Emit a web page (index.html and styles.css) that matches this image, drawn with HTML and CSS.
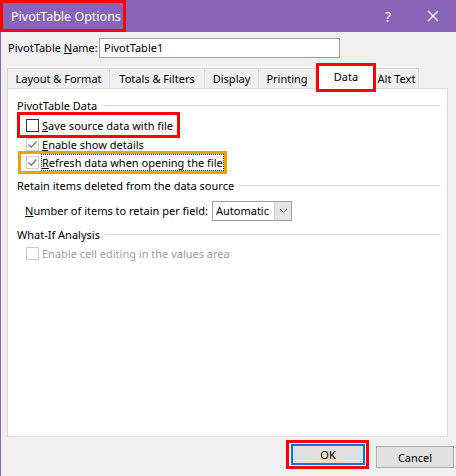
FILE: index.html
```html
<!DOCTYPE html>
<html lang="en">
  <head>
    <meta charset="UTF-8" />
    <title>PivotTable Options</title>
    <link rel="stylesheet" href="styles.css">
  </head>
  <body>
    <div class="window">
      <div class="titlebar">
        <span class="title mark-red">PivotTable Options</span>
        <span class="help">?</span>
        <svg class="close" width="12" height="12" viewBox="0 0 12 12">
          <path d="M1 1 L11 11 M11 1 L1 11" stroke="#fff" stroke-width="1.3" fill="none" />
        </svg>
      </div>
      <div class="content">
        <div class="name-row">
          <label>PivotTable <u>N</u>ame:</label>
          <div class="input">PivotTable1</div>
        </div>
        <div class="tabs">
          <div class="tab w-layout">Layout &amp; Format</div>
          <div class="tab w-totals">Totals &amp; Filters</div>
          <div class="tab w-display">Display</div>
          <div class="tab w-printing">Printing</div>
          <div class="tab active">Data</div>
          <div class="tab w-alt">Alt Text</div>
        </div>
        <div class="panel">
          <div class="group">PivotTable Data</div>
          <div class="check-row first">
            <span class="row-box mark-red">
              <span class="box"></span>
              <span><u>S</u>ave source data with file</span>
            </span>
          </div>
          <div class="check-row">
            <span class="row-box">
              <span class="box checked">
                <svg width="11" height="11" viewBox="0 0 11 11"><path d="M1.5 5.5 L4.2 8.2 L9.5 2.5" stroke="#6d6d6d" stroke-width="1.2" fill="none" /></svg>
              </span>
              <span><u>E</u>nable show details</span>
            </span>
          </div>
          <div class="check-row">
            <span class="row-box mark-orange">
              <span class="box checked">
                <svg width="11" height="11" viewBox="0 0 11 11"><path d="M1.5 5.5 L4.2 8.2 L9.5 2.5" stroke="#6d6d6d" stroke-width="1.2" fill="none" /></svg>
              </span>
              <span class="focus"><u>R</u>efresh data when opening the file</span>
            </span>
          </div>
          <div class="group">Retain items deleted from the data source</div>
          <div class="select-row">
            <span><u>N</u>umber of items to retain per field:</span>
            <div class="select">
              <span class="select-value">Automatic</span>
              <span class="select-arrow">
                <svg width="9" height="6" viewBox="0 0 9 6"><path d="M1 1 L4.5 4.5 L8 1" stroke="#555" stroke-width="1" fill="none" /></svg>
              </span>
            </div>
          </div>
          <div class="group what-if">What-If Analysis</div>
          <div class="check-row disabled">
            <span class="row-box">
              <span class="box"></span>
              <span>Enable cell editing in the values area</span>
            </span>
          </div>
        </div>
        <div class="buttons">
          <div class="mark-red btn-wrap"><button class="btn default">OK</button></div>
          <button class="btn cancel">Cancel</button>
        </div>
      </div>
    </div>
  </body>
</html>
```

FILE: styles.css
```css
* {
  margin: 0;
  padding: 0;
  box-sizing: border-box;
}
body {
  width: 456px;
  height: 476px;
  overflow: hidden;
  background: #f0f0f0;
  font-family: "Noto Sans", "Liberation Sans", sans-serif;
  font-size: 11px;
  color: #000;
  white-space: nowrap;
}
.window {
  height: 476px;
  border-left: 1px solid #8a66ba;
  display: flex;
  flex-direction: column;
}
.titlebar {
  height: 32px;
  background: #8764b8;
  color: #fff;
  display: flex;
  align-items: center;
}
.title {
  font-size: 12.5px;
  height: 32px;
  width: 126px;
  padding-left: 8px;
  display: flex;
  align-items: center;
  margin-left: -1px;
}
.mark-red {
  border: 3px solid #ff0000;
}
.help {
  margin-left: auto;
  font-size: 14px;
  margin-right: 36px;
}
.close {
  margin-right: 17px;
}
.content {
  flex: 1;
  padding: 6px 0 0 6px;
  display: flex;
  flex-direction: column;
}
.name-row {
  display: flex;
  align-items: center;
  gap: 1px;
  height: 19px;
}
.name-row label {
  padding-left: 1px;
  width: 91px;
}
.input {
  width: 241px;
  height: 20px;
  background: #fff;
  border: 1px solid #a0a0a0;
  padding: 0 4px;
  line-height: 18px;
}
.tabs {
  display: flex;
  align-items: flex-end;
  margin-top: 6px;
  height: 25px;
}
.tab {
  height: 20px;
  border: 1px solid #d9d9d9;
  border-bottom: none;
  margin-right: -1px;
  text-align: center;
  line-height: 19px;
  background: #f0f0f0;
}
.w-layout { width: 103px; }
.w-totals { width: 96px; }
.w-display { width: 55px; }
.w-printing { width: 58px; margin-right: 0; }
.tab.active {
  width: 60px;
  height: 29px;
  background: #fff;
  border: 3px solid #ff0000;
  line-height: 22px;
  margin-bottom: -4px;
  margin-right: -2px;
  position: relative;
  z-index: 1;
}
.w-alt { width: 45px; }
.panel {
  width: 441px;
  height: 349px;
  background: #fff;
  border: 1px solid #d9d9d9;
  padding: 7px 6px 0 9px;
}
.group {
  display: flex;
  align-items: center;
  gap: 5px;
  height: 18px;
  margin-top: 4px;
}
.panel .group:first-child {
  margin-top: 0;
}
.group.what-if {
  margin-top: 1px;
}
.group::after {
  content: '';
  flex: 1;
  height: 1px;
  background: #dcdcdc;
}
.check-row {
  height: 19px;
  display: flex;
  align-items: center;
}
.check-row.first {
  margin-top: 1px;
}
.row-box {
  display: inline-flex;
  align-items: center;
  gap: 3px;
  padding: 3px 4px 2px 6px;
  border: 3px solid transparent;
}
.row-box.mark-red {
  border-color: #ff0000;
}
.row-box.mark-orange {
  border-color: #f2a200;
  margin-left: 1px;
  padding: 1px 1px 1px 6px;
}
.box {
  width: 13px;
  height: 13px;
  border: 1px solid #333;
  display: flex;
  align-items: center;
  justify-content: center;
  background: #fff;
}
.box.checked {
  border-color: #cfcfcf;
}
.mark-orange .box {
  margin-left: -1px;
}
.focus {
  outline: 1px dotted #333;
}
.disabled {
  color: #a0a0a0;
  margin-top: 0;
}
.disabled .box {
  border-color: #cccccc;
}
.select-row {
  display: flex;
  align-items: center;
  gap: 4px;
  height: 27px;
  padding-left: 8px;
  margin-top: 3px;
}
.select {
  width: 84px;
  height: 20px;
  border: 1px solid #a0a0a0;
  display: flex;
  margin-left: auto;
  margin-right: 149px;
}
.select-value {
  flex: 1;
  padding-left: 3px;
  line-height: 18px;
}
.select-arrow {
  width: 17px;
  background: #e5e5e5;
  border-left: 1px solid #cccccc;
  display: flex;
  align-items: center;
  justify-content: center;
}
.buttons {
  display: flex;
  align-items: flex-end;
  gap: 7px;
  padding: 3px 0 0 279px;
}
.btn-wrap {
  padding: 1px 1px 1px 2px;
}
.btn {
  font-family: inherit;
  font-size: 11px;
  width: 78px;
  height: 22px;
  background: #e1e1e1;
  border: 1px solid #adadad;
}
.btn.default {
  width: 74px;
  height: 21px;
  border: 2px solid #0078d7;
}
.btn.cancel {
  margin-bottom: 1px;
}
```
